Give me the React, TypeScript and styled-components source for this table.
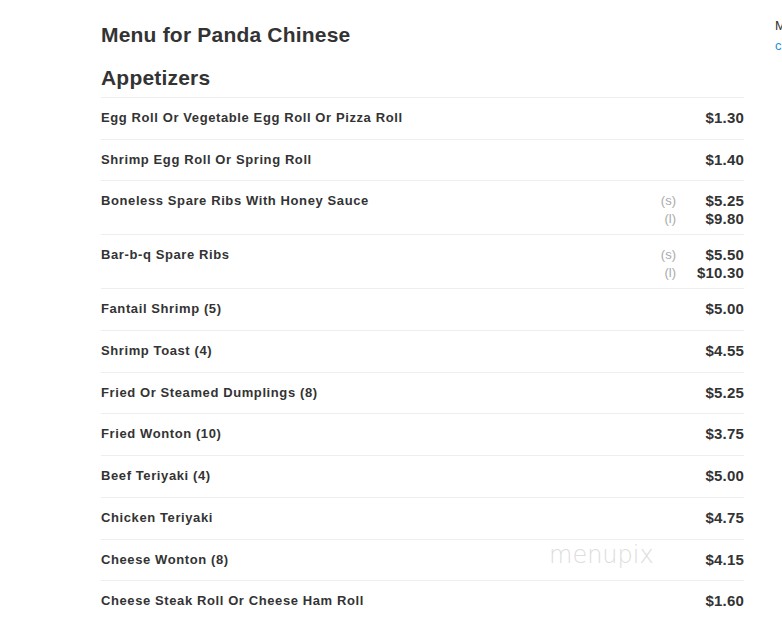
import React from 'react'
import styled, { createGlobalStyle } from 'styled-components'

interface Price {
	size?: string
	amount: string
}

interface Item {
	name: string
	prices: Price[]
}

const items: Item[] = [
	{ name: 'Egg Roll Or Vegetable Egg Roll Or Pizza Roll', prices: [{ amount: '$1.30' }] },
	{ name: 'Shrimp Egg Roll Or Spring Roll', prices: [{ amount: '$1.40' }] },
	{
		name: 'Boneless Spare Ribs With Honey Sauce',
		prices: [
			{ size: '(s)', amount: '$5.25' },
			{ size: '(l)', amount: '$9.80' },
		],
	},
	{
		name: 'Bar-b-q Spare Ribs',
		prices: [
			{ size: '(s)', amount: '$5.50' },
			{ size: '(l)', amount: '$10.30' },
		],
	},
	{ name: 'Fantail Shrimp (5)', prices: [{ amount: '$5.00' }] },
	{ name: 'Shrimp Toast (4)', prices: [{ amount: '$4.55' }] },
	{ name: 'Fried Or Steamed Dumplings (8)', prices: [{ amount: '$5.25' }] },
	{ name: 'Fried Wonton (10)', prices: [{ amount: '$3.75' }] },
	{ name: 'Beef Teriyaki (4)', prices: [{ amount: '$5.00' }] },
	{ name: 'Chicken Teriyaki', prices: [{ amount: '$4.75' }] },
	{ name: 'Cheese Wonton (8)', prices: [{ amount: '$4.15' }] },
	{ name: 'Cheese Steak Roll Or Cheese Ham Roll', prices: [{ amount: '$1.60' }] },
]

const GlobalStyle = createGlobalStyle`
	body {
		margin: 0;
		background: #fff;
		font-family: "Liberation Sans", Arial, sans-serif;
		color: #333;
		overflow: hidden;
	}
`

const Page = styled.div`
	display: flex;
	gap: 31px;
	padding-left: 101px;
	width: 782px;
	height: 638px;
	box-sizing: border-box;
	overflow: hidden;
`

const Main = styled.main`
	width: 643px;
	flex-shrink: 0;
	padding-top: 22px;
`

const Title = styled.h1`
	margin: 0;
	font-size: 21px;
	line-height: 26px;
	font-weight: bold;
	letter-spacing: 0.2px;
	color: #333;
`

const SectionTitle = styled.h2`
	margin: 17px 0 0;
	font-size: 21px;
	line-height: 26px;
	font-weight: bold;
	letter-spacing: 0.2px;
	color: #333;
	padding-bottom: 6px;
	border-bottom: 1px solid #eee;
`

const Row = styled.div`
	position: relative;
	box-sizing: border-box;
	min-height: 41.7px;
	display: flex;
	justify-content: space-between;
	align-items: flex-start;
	padding: 11px 0 6px;
	border-bottom: 1px solid #eee;

	&:last-child {
		border-bottom: none;
	}
`

const Name = styled.div`
	font-size: 13px;
	font-weight: bold;
	line-height: 18px;
	letter-spacing: 0.6px;
	color: #333;
`

const Prices = styled.div`
	display: flex;
	flex-direction: column;
`

const PriceLine = styled.div`
	display: flex;
	justify-content: flex-end;
	align-items: center;
	height: 18px;
	line-height: 18px;
`

const Size = styled.span`
	font-size: 13px;
	color: #aaa;
	text-align: right;
	margin-right: 20px;
`

const Amount = styled.span`
	font-size: 15px;
	font-weight: bold;
	letter-spacing: 0.2px;
	color: #333;
	min-width: 48px;
	text-align: right;
`

const Watermark = styled.span`
	position: absolute;
	left: 448px;
	top: 1px;
	font-family: "DejaVu Sans", sans-serif;
	font-size: 24px;
	font-weight: 200;
	color: #ddd;
	pointer-events: none;
`

const Sidebar = styled.aside`
	padding-top: 16px;
	font-size: 13px;
	line-height: 20px;
	white-space: nowrap;
`

const SideHeading = styled.div`
	color: #333;
`

const SideLink = styled.a`
	color: #2a8fd6;
	text-decoration: none;
`

export default function App() {
	return (
		<>
			<GlobalStyle />
			<Page>
				<Main>
					<Title>Menu for Panda Chinese</Title>
					<SectionTitle>Appetizers</SectionTitle>
					{items.map((item, i) => (
						<Row key={item.name}>
							<Name>{item.name}</Name>
							<Prices>
								{item.prices.map(p => (
									<PriceLine key={p.amount}>
										{p.size && <Size>{p.size}</Size>}
										<Amount>{p.amount}</Amount>
									</PriceLine>
								))}
							</Prices>
							{i === 10 && <Watermark>menupix</Watermark>}
						</Row>
					))}
				</Main>
				<Sidebar>
					<SideHeading>More menus</SideHeading>
					<SideLink href="#">check</SideLink>
				</Sidebar>
			</Page>
		</>
	)
}
